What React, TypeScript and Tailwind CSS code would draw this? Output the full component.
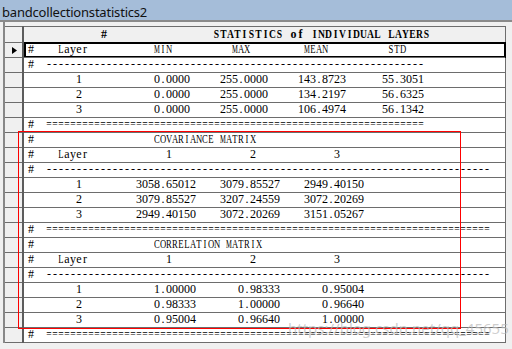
import React from "react";
import clsx from "clsx";

type Part = [number, string];

// build a fixed-column text line, like the original text file
const line = (parts: Part[]): string => {
  let s = "";
  for (const [col, text] of parts) {
    s = s.padEnd(col, " ") + text;
  }
  return s;
};

const dashes = (n: number) => line([[0, "#"], [3, "-".repeat(n)]]);
const equals = (n: number) => line([[0, "#"], [3, "=".repeat(n)]]);
const matrixHead = line([[0, "#"], [5, "Layer"], [23, "1"], [37, "2"], [51, "3"]]);

const statRow = (layer: string, min: string, max: string, mean: string, std: string) =>
  line([[8, layer], [21, min], [32, max], [45, mean], [59, std]]);

const covRow = (layer: string, a: string, b: string, c: string) =>
  line([[8, layer], [18, a], [32, b], [46, c]]);

const corRow = (layer: string, a: string, b: string, c: string) =>
  line([[8, layer], [21, a], [35, b], [49, c]]);

const ROWS: string[] = [
  line([[0, "#"], [5, "Layer"], [21, "MIN"], [34, "MAX"], [46, "MEAN"], [60, "STD"]]),
  dashes(63),
  statRow("1", "0.0000", "255.0000", "143.8723", "55.3051"),
  statRow("2", "0.0000", "255.0000", "134.2197", "56.6325"),
  statRow("3", "0.0000", "255.0000", "106.4974", "56.1342"),
  equals(63),
  line([[0, "#"], [21, "COVARIANCE MATRIX"]]),
  matrixHead,
  dashes(74),
  covRow("1", "3058.65012", "3079.85527", "2949.40150"),
  covRow("2", "3079.85527", "3207.24559", "3072.20269"),
  covRow("3", "2949.40150", "3072.20269", "3151.05267"),
  equals(74),
  line([[0, "#"], [21, "CORRELATION MATRIX"]]),
  matrixHead,
  dashes(74),
  corRow("1", "1.00000", "0.98333", "0.95004"),
  corRow("2", "0.98333", "1.00000", "0.96640"),
  corRow("3", "0.95004", "0.96640", "1.00000"),
  equals(74),
];

// squeeze a glyph so it stays inside its fixed slot
const squeeze = (ch: string, bold?: boolean) => {
  if (ch === "M" || ch === "W") return "scale-x-[0.55]";
  if (/[A-Z]/.test(ch)) return bold ? "scale-x-[0.8]" : "scale-x-[0.72]";
  if (ch === "=") return "scale-x-[0.8]";
  return "";
};

// SimSun-style fixed cells: every character gets its own slot
const Cells: React.FC<{ text: string; bold?: boolean }> = ({ text, bold }) => (
  <>
    {text.split("").map((ch, i) => (
      <span
        key={i}
        className={clsx(
          "flex shrink-0 justify-center",
          bold ? "w-[7px]" : "w-[6px]",
          squeeze(ch, bold)
        )}>
        {ch === " " ? "\u00a0" : ch}
      </span>
    ))}
  </>
);

const Row: React.FC<{ text: string; selected?: boolean }> = ({ text, selected }) => (
  <div className="flex h-[15px]">
    <div className="w-[17px] border-t border-[#6d6d6d] bg-[#f0f0f0] flex items-center justify-center pl-[2px]">
      {selected && (
        <svg width={5} height={7} viewBox="0 0 5 7">
          <polygon points="0,0 5,3.5 0,7" fill="#000" />
        </svg>
      )}
    </div>
    <div className="w-[2px] bg-[#5c5c5c]" />
    <div className="relative flex w-[481px] border-t border-[#6d6d6d] bg-white pl-[4px] whitespace-pre font-['Liberation_Serif',serif] text-[12px] leading-[13px] text-black">
      <Cells text={text} />
      {selected && (
        <div className="absolute -top-px left-0 -right-px -bottom-px border-2 border-black" />
      )}
    </div>
    <div className="w-px bg-[#6d6d6d]" />
  </div>
);

export default function App() {
  return (
    <div className="relative w-[512px] h-[349px] overflow-hidden bg-[#f0f0f0]">
      <div className="h-[20px] bg-[#a5bdd9] pl-[2px] pt-[3px] font-['Noto_Sans',sans-serif] text-[13px] leading-[18px] tracking-[-0.2px] text-[#111]">
        bandcollectionstatistics2
      </div>
      <div className="h-[2px] bg-[#8a8a8a]" />
      <div className="flex">
        <div className="w-[3px] bg-[#f0f0f0]" />
        <div className="w-[2px] bg-[#888888]" />
        <div className="flex flex-col pt-[4px]">
          <div className="flex h-[16px]">
            <div className="w-[17px] border-t border-[#6d6d6d] bg-[#f0f0f0]" />
            <div className="w-[2px] bg-[#5c5c5c]" />
            <div className="flex w-[481px] border-t border-[#6d6d6d] bg-[#f0f0f0] font-['Liberation_Serif',serif] font-bold text-[12px] leading-[14px] text-black whitespace-pre">
              <div className="flex w-[160px] justify-center">
                <Cells text="#" bold />
              </div>
              <div className="flex pl-[29px]">
                <Cells text="STATISTICS of INDIVIDUAL LAYERS" bold />
              </div>
            </div>
            <div className="w-px bg-[#6d6d6d]" />
          </div>
          {ROWS.map((r, i) => (
            <Row key={i} text={r} selected={i === 0} />
          ))}
          <div className="flex h-px">
            <div className="w-[17px] bg-[#6d6d6d]" />
            <div className="w-[2px] bg-[#5c5c5c]" />
            <div className="w-[482px] bg-[#6d6d6d]" />
          </div>
        </div>
      </div>

      {/* red annotation box */}
      <div className="absolute left-[18px] top-[131px] w-[443px] h-[198px] border border-[#ff0000]" />

      {/* blog watermark */}
      <div className="absolute left-[288px] top-[320px] font-['Noto_Sans',sans-serif] text-[15px] leading-[16px] text-[rgba(185,185,185,0.7)] whitespace-pre">
        https://blog.csdn.net/qq_45655
      </div>
    </div>
  );
}
